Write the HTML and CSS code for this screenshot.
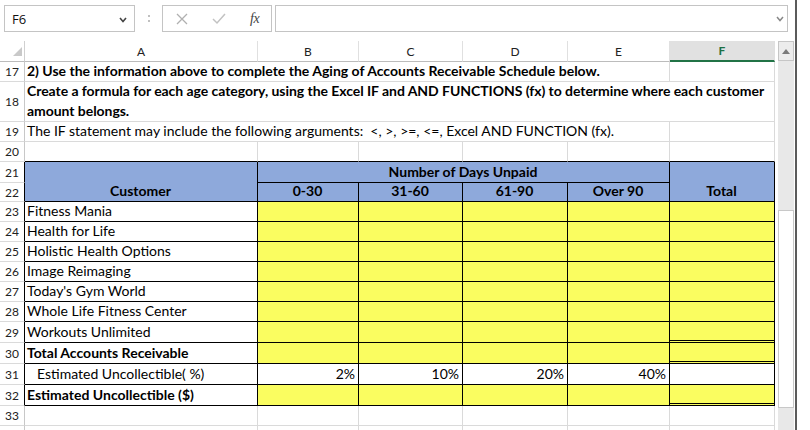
FILE: index.html
```html
<!DOCTYPE html>
<html>
<head>
<meta charset="utf-8">
<link rel="stylesheet" href="styles.css">
</head>
<body>
<div class="app">
  <div class="main">
    <div class="fbar">
      <div class="namebox">
        <span class="ref">F6</span>
        <svg class="chev" width="8" height="6" viewBox="0 0 8 6"><polyline points="1,1 4,4.5 7,1" fill="none" stroke="#444" stroke-width="1.6"/></svg>
      </div>
      <div class="dots"><span></span><span></span></div>
      <div class="btns">
        <svg width="12" height="12" viewBox="0 0 12 12"><path d="M1 1L11 11M11 1L1 11" stroke="#b0b0b0" stroke-width="1.3" fill="none"/></svg>
        <svg width="14" height="12" viewBox="0 0 14 12"><polyline points="1,6 5,10 13,1" fill="none" stroke="#c2c2c2" stroke-width="1.5"/></svg>
        <span class="fx">fx</span>
      </div>
      <div class="finput">
        <svg class="chev2" width="8" height="6" viewBox="0 0 8 6"><polyline points="1,1 4,4.5 7,1" fill="none" stroke="#888" stroke-width="1.5"/></svg>
      </div>
    </div>
    <div class="sheet">
      <div class="grid">
        <div class="corner"><svg width="10" height="10" viewBox="0 0 10 10"><polygon points="9,0 9,9 0,9" fill="#c9c9c9"/></svg></div>
        <div class="ch">A</div><div class="ch">B</div><div class="ch">C</div><div class="ch">D</div><div class="ch">E</div><div class="ch sel">F</div>

        <div class="rn">17</div><div class="c m5 b">2) Use the information above to complete the Aging of Accounts Receivable Schedule below.</div><div class="c"></div>
        <div class="rn">18</div><div class="c m6 b"><div class="lines"><div>Create a formula for each age category, using the Excel IF and AND FUNCTIONS (fx) to determine where each customer</div><div>amount belongs.</div></div></div>
        <div class="rn">19</div><div class="c m5">The IF statement may include the following arguments:&nbsp; &lt;, &gt;, &gt;=, &lt;=, Excel AND FUNCTION (fx).</div><div class="c"></div>
        <div class="rn">20</div><div class="c top"></div><div class="c top"></div><div class="c top"></div><div class="c top"></div><div class="c top"></div><div class="c top"></div>

        <div class="rn tl">21</div><div class="c t a hd r2 ctr b">Customer</div><div class="c t hd m4 ctr b">Number of Days Unpaid</div><div class="c t hd r2 ctr b">Total</div>
        <div class="rn tl">22</div><div class="c t hd ctr b">0-30</div><div class="c t hd ctr b">31-60</div><div class="c t hd ctr b">61-90</div><div class="c t hd ctr b">Over 90</div>

        <div class="rn tl">23</div><div class="c t a">Fitness Mania</div><div class="c t y"></div><div class="c t y"></div><div class="c t y"></div><div class="c t y"></div><div class="c t y"></div>
        <div class="rn tl">24</div><div class="c t a">Health for Life</div><div class="c t y"></div><div class="c t y"></div><div class="c t y"></div><div class="c t y"></div><div class="c t y"></div>
        <div class="rn tl">25</div><div class="c t a">Holistic Health Options</div><div class="c t y"></div><div class="c t y"></div><div class="c t y"></div><div class="c t y"></div><div class="c t y"></div>
        <div class="rn tl">26</div><div class="c t a">Image Reimaging</div><div class="c t y"></div><div class="c t y"></div><div class="c t y"></div><div class="c t y"></div><div class="c t y"></div>
        <div class="rn tl">27</div><div class="c t a">Today's Gym World</div><div class="c t y"></div><div class="c t y"></div><div class="c t y"></div><div class="c t y"></div><div class="c t y"></div>
        <div class="rn tl">28</div><div class="c t a">Whole Life Fitness Center</div><div class="c t y"></div><div class="c t y"></div><div class="c t y"></div><div class="c t y"></div><div class="c t y"></div>
        <div class="rn tl">29</div><div class="c t a">Workouts Unlimited</div><div class="c t y"></div><div class="c t y"></div><div class="c t y"></div><div class="c t y"></div><div class="c t y dbl"></div>
        <div class="rn tl">30</div><div class="c t a b">Total Accounts Receivable</div><div class="c t y"></div><div class="c t y"></div><div class="c t y"></div><div class="c t y"></div><div class="c t y dbl"></div>
        <div class="rn tl">31</div><div class="c t a ind">Estimated Uncollectible( %)</div><div class="c t num">2%</div><div class="c t num">10%</div><div class="c t num">20%</div><div class="c t num">40%</div><div class="c t"></div>
        <div class="rn tl">32</div><div class="c t a b">Estimated Uncollectible ($)</div><div class="c t y"></div><div class="c t y"></div><div class="c t y"></div><div class="c t y"></div><div class="c t y dbl"></div>

        <div class="rn">33</div><div class="c"></div><div class="c"></div><div class="c"></div><div class="c"></div><div class="c"></div><div class="c"></div>
        <div class="rn"></div><div class="c"></div><div class="c"></div><div class="c"></div><div class="c"></div><div class="c"></div><div class="c"></div>
      </div>
      <div class="vscroll">
        <div class="track">
          <div class="upbtn"><svg width="8" height="5" viewBox="0 0 8 5"><polygon points="0,5 8,5 4,0" fill="#7a7a7a"/></svg></div>
          <div class="gap1"></div>
          <div class="thumb"></div>
          <div class="gap2"></div>
        </div>
      </div>
    </div>
  </div>
  <div class="edge"></div>
  <div class="rest"></div>
</div>
</body>
</html>
```

FILE: styles.css
```css
html, body {
  margin: 0;
  padding: 0;
  background: #fff;
}
body {
  width: 810px;
  height: 430px;
  overflow: hidden;
}
.app {
  display: flex;
  width: 810px;
  height: 430px;
}
.main {
  width: 795px;
  display: flex;
  flex-direction: column;
}
.edge {
  width: 2px;
  background: #5b5b5b;
}
.rest {
  flex: 1;
  background: #fff;
}

/* formula bar */
.fbar {
  height: 41px;
  display: flex;
  align-items: flex-start;
  padding-top: 5px;
  box-sizing: border-box;
  font-family: "Open Sans", "Liberation Sans", sans-serif;
}
.namebox {
  margin-left: 4px;
  width: 131px;
  height: 27px;
  border: 1px solid #c4c4c4;
  box-sizing: border-box;
  display: flex;
  align-items: center;
  justify-content: space-between;
  padding: 0 7px 0 7px;
}
.ref {
  font-size: 13px;
  color: #111;
}
.chev {
  margin-top: 2px;
}
.dots {
  width: 27px;
  height: 27px;
  display: flex;
  flex-direction: column;
  align-items: center;
  justify-content: center;
  gap: 3px;
}
.dots span {
  width: 2px;
  height: 2px;
  background: #c0c0c0;
}
.btns {
  width: 110px;
  height: 27px;
  border: 1px solid #c4c4c4;
  box-sizing: border-box;
  display: flex;
  align-items: center;
  padding-left: 13px;
  gap: 24px;
}
.fx {
  font-family: "Liberation Serif", "DejaVu Serif", serif;
  font-style: italic;
  font-size: 14px;
  color: #444;
  letter-spacing: -0.5px;
}
.finput {
  margin-left: 3px;
  width: 513px;
  height: 27px;
  border: 1px solid #c4c4c4;
  box-sizing: border-box;
  display: flex;
  align-items: center;
  justify-content: flex-end;
  padding-right: 3px;
}

/* sheet */
.sheet {
  flex: 1;
  display: flex;
  overflow: hidden;
}
.grid {
  display: grid;
  grid-template-columns: 25px 233px 101px 104px 105px 102px 105px;
  grid-template-rows: 21px 20px 40px 20px 20px 21px 19px 20px 20px 20px 20px 20px 20px 21px 21px 21px 21px 20px 20px;
  font-family: Lato, "Liberation Sans", sans-serif;
  font-size: 14px;
  color: #000;
  align-self: flex-start;
}
.grid > div {
  box-sizing: border-box;
  border-right: 1px solid #dadada;
  border-bottom: 1px solid #dadada;
  min-width: 0;
  overflow: visible;
  white-space: nowrap;
}
.corner {
  display: flex;
  align-items: flex-end;
  justify-content: flex-end;
  padding: 0 1px 4px 0;
  border-bottom-color: #bcbcbc !important;
  border-right-color: #d0d0d0 !important;
}
.ch {
  display: flex;
  align-items: center;
  justify-content: center;
  font-size: 12px;
  color: #222;
  border-bottom-color: #bcbcbc !important;
  border-right-color: #e0e0e0 !important;
}
.ch.sel {
  background: #e1e1e1;
  color: #1d7044;
  font-weight: 700;
  border-bottom: 2px solid #217346 !important;
}
.rn {
  display: flex;
  align-items: center;
  justify-content: center;
  font-size: 12px;
  color: #222;
  border-right-color: #c8c8c8 !important;
}
.rn.tl {
  border-right-color: #000 !important;
}
.c {
  display: flex;
  align-items: flex-end;
  padding: 0 3px 1px 2px;
  line-height: 19px;
}
.lines {
  display: flex;
  flex-direction: column;
  line-height: 19.5px;
  letter-spacing: -0.05px;
}
.m6 {
  grid-column: span 6;
}
.m5 {
  grid-column: span 5;
}
.m4 {
  grid-column: span 4;
}
.r2 {
  grid-row: span 2;
}
.b {
  font-weight: 700;
}
.ctr {
  justify-content: center;
}
.top {
  border-bottom-color: #000 !important;
}
.t {
  border-right-color: #000 !important;
  border-bottom-color: #000 !important;
}
.hd {
  background: #8ea9db;
}
.y {
  background: #fafd60;
}
.dbl {
  border-bottom: 3px double #000 !important;
}
.ind {
  padding-left: 12px;
}
.num {
  justify-content: flex-end;
}

/* scrollbar */
.vscroll {
  width: 20px;
  padding-left: 3px;
  box-sizing: border-box;
}
.track {
  width: 16px;
  height: 389px;
  background: #e8e8e8;
  display: flex;
  flex-direction: column;
}
.upbtn {
  height: 20px;
  border: 1px solid #c6c6c6;
  box-sizing: border-box;
  background: #ececec;
  display: flex;
  align-items: center;
  justify-content: center;
}
.gap1 {
  height: 149px;
}
.thumb {
  height: 198px;
  background: #fff;
  border: 1px solid #c8c8c8;
  box-sizing: border-box;
}
.gap2 {
  flex: 1;
}
```
